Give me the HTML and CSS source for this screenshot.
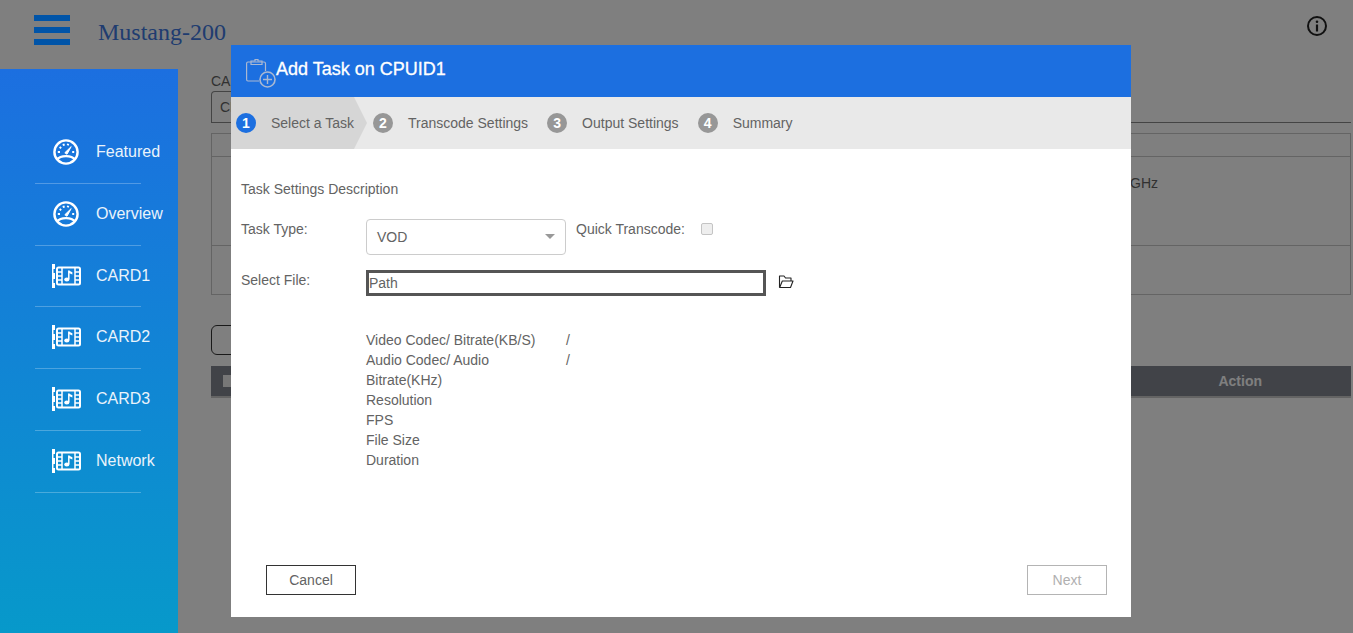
FILE: index.html
```html
<!DOCTYPE html>
<html lang="en">
<head>
<meta charset="utf-8">
<title>Mustang-200</title>
<link rel="stylesheet" href="styles.css">
</head>
<body>
<svg class="defs" width="0" height="0" aria-hidden="true">
  <symbol id="gauge" viewBox="0 0 26 26">
    <circle cx="13" cy="13" r="11.6" fill="none" stroke="currentColor" stroke-width="2.400"/>
    <path d="M4 20.500C7.500 16 18.500 16 22 20.500" fill="none" stroke="currentColor" stroke-width="2.400"/>
    <path d="M11.800 13.800L18.200 7.600L14 15.200Z" fill="currentColor" stroke="currentColor" stroke-width="1"/>
    <path d="M4.800 13h2.200M6.600 8l1.600 1.200M10.400 4.800l.6 2M15.200 4.800l-.5 1.600M19.200 13h2" stroke="currentColor" stroke-width="2" fill="none"/>
  </symbol>
  <symbol id="card" viewBox="0 0 30 24">
    <path d="M1 0h3v5H2.500v4H4v6H2.500v4H4v5H1z" fill="currentColor"/>
    <rect x="6" y="3.500" width="23" height="17" rx="1.500" fill="none" stroke="currentColor" stroke-width="2"/>
    <path d="M11 4v16M24 4v16" stroke="currentColor" stroke-width="1.500" fill="none"/>
    <path d="M7 8h4M7 12h4M7 16h4M24 8h4M24 12h4M24 16h4" stroke="currentColor" stroke-width="1.300" fill="none"/>
    <path d="M17.800 6.500v8.500" stroke="currentColor" stroke-width="1.500" fill="none"/>
    <path d="M17.800 6.500l3.600 1.800v2.200l-3.600-1.500z" fill="currentColor"/>
    <ellipse cx="15.800" cy="15.400" rx="2.600" ry="2" fill="currentColor"/>
  </symbol>
</svg>

<header class="topbar">
  <span class="hamburger"><i></i><i></i><i></i></span>
  <span class="brand">Mustang-200</span>
  <svg class="info" width="20" height="20" viewBox="0 0 20 20" aria-hidden="true">
    <circle cx="10" cy="10" r="9" fill="none" stroke="currentColor" stroke-width="2"/>
    <circle cx="10" cy="5.800" r="1.300" fill="currentColor"/>
    <path d="M10 8.500v7" stroke="currentColor" stroke-width="2.200"/>
  </svg>
</header>

<div class="layout">
  <nav class="sidebar">
    <a class="nav-item"><span class="nav-icon"><svg width="26" height="26"><use href="#gauge"/></svg></span>Featured</a>
    <a class="nav-item"><span class="nav-icon"><svg width="26" height="26"><use href="#gauge"/></svg></span>Overview</a>
    <a class="nav-item"><span class="nav-icon"><svg width="30" height="24"><use href="#card"/></svg></span>CARD1</a>
    <a class="nav-item"><span class="nav-icon"><svg width="30" height="24"><use href="#card"/></svg></span>CARD2</a>
    <a class="nav-item"><span class="nav-icon"><svg width="30" height="24"><use href="#card"/></svg></span>CARD3</a>
    <a class="nav-item"><span class="nav-icon"><svg width="30" height="24"><use href="#card"/></svg></span>Network</a>
  </nav>

  <main class="content">
    <div class="card-label">CARD1</div>
    <div class="tabs"><span class="tab">CPUID1</span></div>
    <div class="info-table">
      <div class="info-row head"></div>
      <div class="info-row tall"><span>Intel Core i7 3.40GHz</span></div>
      <div class="info-row"></div>
    </div>
    <div class="add-btn"></div>
    <div class="task-head"><span class="task-check"></span><span class="task-action">Action</span></div>
  </main>
</div>

<div class="overlay"></div>

<section class="modal">
  <div class="modal-head">
    <svg width="30" height="30" viewBox="0 0 30 30" aria-hidden="true">
      <path d="M13 22H2A1.500 1.500 0 0 1 .6 20.500V4.500A1.500 1.500 0 0 1 2 3H18A1.500 1.500 0 0 1 19.500 4.500V12" fill="none" stroke="currentColor" stroke-width="1.200"/>
      <path d="M5 5.500V2h4V.6h3V2h4v3.500z" fill="none" stroke="currentColor" stroke-width="1.200"/>
      <circle cx="21.500" cy="20.500" r="7.500" fill="none" stroke="currentColor" stroke-width="1.600"/>
      <path d="M17 20.500h9M21.500 16v9" stroke="currentColor" stroke-width="1.400"/>
    </svg>
    <h1>Add Task on CPUID1</h1>
  </div>

  <ol class="steps">
    <li class="step active"><b>1</b><span>Select a Task</span></li>
    <li class="step"><b>2</b><span>Transcode Settings</span></li>
    <li class="step"><b>3</b><span>Output Settings</span></li>
    <li class="step"><b>4</b><span>Summary</span></li>
  </ol>

  <div class="modal-body">
    <p class="desc">Task Settings Description</p>

    <div class="form-row type-row">
      <label class="form-label">Task Type:</label>
      <div class="select">VOD<i class="caret"></i></div>
      <label class="quick">Quick Transcode:</label>
      <span class="checkbox"></span>
    </div>

    <div class="form-row file-row">
      <label class="form-label">Select File:</label>
      <div class="path">Path</div>
      <svg class="folder" width="16" height="15" viewBox="0 0 16 15" aria-hidden="true">
        <path d="M1.500 13.500V2h4.500l1.500 2h5.500v3M1.700 13.500H12.500L15 7H4.300z" fill="none" stroke="currentColor" stroke-width="1.100" stroke-linejoin="round"/>
      </svg>
    </div>

    <dl class="summary">
      <dt>Video Codec/ Bitrate(KB/S)</dt><dd>/</dd>
      <dt>Audio Codec/ Audio Bitrate(KHz)</dt><dd>/</dd>
      <dt>Resolution</dt><dd></dd>
      <dt>FPS</dt><dd></dd>
      <dt>File Size</dt><dd></dd>
      <dt>Duration</dt><dd></dd>
    </dl>

    <div class="modal-foot">
      <button class="btn cancel">Cancel</button>
      <button class="btn next">Next</button>
    </div>
  </div>
</section>
</body>
</html>
```

FILE: styles.css
```css
* { box-sizing: border-box; }
html, body { height: 100%; }
body {
  margin: 0;
  height: 633px;
  overflow: hidden;
  background: #fff;
  font-family: "Liberation Sans", Arial, sans-serif;
  font-size: 14px;
  color: #636363;
}
.defs { display: block; height: 0; }

.topbar {
  height: 69px;
  display: flex;
  align-items: flex-start;
  padding-left: 34px;
}
.hamburger {
  position: relative;
  z-index: 20;
  display: flex;
  flex-direction: column;
  gap: 6px;
  width: 36px;
  margin-top: 15px;
}
.hamburger i { display: block; height: 6px; background: #0054a8; }
.brand {
  margin: 17px 0 0 28px;
  font-family: "Liberation Serif", "Times New Roman", serif;
  font-size: 24px;
  line-height: 30px;
  color: #4078e0;
}
.info { margin: 16px 26px 0 auto; color: #222; }

.layout { display: flex; height: 564px; }
.sidebar {
  position: relative;
  z-index: 20;
  flex: 0 0 178px;
  min-width: 0;
  padding: 53.400px 37px 0 35px;
  background: linear-gradient(180deg, #1c6fe0 0%, #0799ca 100%);
}
.nav-item {
  display: flex;
  align-items: center;
  height: 61.700px;
  border-bottom: 1px solid rgba(255, 255, 255, .25);
  color: #eaf3fb;
  font-size: 16px;
  white-space: nowrap;
  padding-bottom: 1px;
}
.nav-icon {
  flex: 0 0 61px;
  display: flex;
  justify-content: center;
}
.nav-icon svg { display: block; color: #fff; }

.content { flex: 1; min-width: 0; padding: 2px 2px 0 33px; }
.card-label { line-height: 20px; }
.tabs { height: 32px; border-bottom: 1px solid #888; }
.tab {
  display: block;
  width: 200px;
  height: 32px;
  padding: 7px 8px;
  border: 1px solid #888;
  border-bottom: 0;
  border-radius: 4px 4px 0 0;
}
.info-table { margin-top: 10px; height: 162px; border: 1px solid #c8c8c8; }
.info-row { border-bottom: 1px solid #c8c8c8; height: 49px; }
.info-row.head { height: 23px; }
.info-row.tall { height: 89px; padding: 17px 192px 0 0; text-align: right; line-height: 18px; }
.info-row:last-child { border-bottom: 0; }
.add-btn {
  margin-top: 30px;
  width: 200px;
  height: 30px;
  border: 1px solid #333;
  border-radius: 6px;
}
.task-head {
  display: flex;
  align-items: center;
  justify-content: space-between;
  margin-top: 11px;
  height: 32px;
  background: #828690;
  border-bottom: 2px solid #c8c8c8;
  padding: 0 89px 0 12px;
  font-weight: 700;
  color: #fff;
}
.task-check { width: 12px; height: 12px; background: #eee; }

.overlay {
  position: fixed;
  inset: 0;
  z-index: 10;
  background: rgba(0, 0, 0, .5);
}

.modal {
  position: fixed;
  z-index: 30;
  left: 231px;
  top: 45px;
  width: 900px;
  height: 572px;
  display: flex;
  flex-direction: column;
  background: #fff;
}
.modal-head {
  flex: 0 0 52px;
  display: flex;
  align-items: center;
  padding: 0 0 4px 15px;
  background: #1c6fe0;
  color: #a9b8d2;
}
.modal-head svg { display: block; margin-top: 9px; }
.modal-head h1 {
  margin: 0;
  font-size: 18px;
  font-weight: 400;
  color: #fff;
  -webkit-text-stroke: .3px #fff;
}
.steps {
  flex: 0 0 52px;
  display: flex;
  margin: 0;
  padding: 0;
  list-style: none;
  background: #e9e9e9;
}
.step {
  display: flex;
  align-items: center;
  margin-right: 19px;
}
.step b {
  flex: 0 0 20px;
  width: 20px;
  height: 20px;
  margin-right: 15px;
  border-radius: 50%;
  background: #979797;
  color: #fff;
  font-size: 14px;
  line-height: 20px;
  text-align: center;
}
.step.active {
  width: 136px;
  margin-right: 6px;
  padding-left: 5px;
  background: #d6d6d6;
  clip-path: polygon(0 0, 123px 0, 100% 50%, 123px 100%, 0 100%);
  white-space: nowrap;
}
.step.active b { background: #1c6fe0; }

.modal-body {
  flex: 1;
  display: flex;
  flex-direction: column;
  padding: 30px 24px 22px 10px;
  line-height: 20px;
}
.desc { margin: 0; }
.form-row { display: flex; align-items: flex-start; }
.form-label { flex: 0 0 125px; }
.type-row { margin-top: 20px; }
.select {
  position: relative;
  width: 200px;
  height: 36px;
  padding: 7px 10px;
  border: 1px solid #ccc;
  border-radius: 4px;
}
.caret {
  position: absolute;
  right: 10px;
  top: 14px;
  border: 5px solid transparent;
  border-top: 5px solid #999;
  border-bottom: 0;
}
.quick { margin-left: 10px; }
.checkbox {
  width: 12px;
  height: 12px;
  margin: 4px 0 0 16px;
  background: #eee;
  border: 1px solid #c4c4c4;
  border-radius: 2px;
}
.file-row { margin-top: 15px; }
.path {
  width: 400px;
  height: 26px;
  border: 3px solid #555;
  line-height: 21px;
}
.folder { margin: 4px 0 0 12px; color: #222; }

.summary {
  display: grid;
  grid-template-columns: 200px 1fr;
  margin: 34px 0 0 125px;
}
.summary dt, .summary dd { margin: 0; }

.modal-foot {
  display: flex;
  justify-content: space-between;
  margin-top: auto;
  padding-left: 25px;
}
.btn {
  height: 30px;
  background: #fff;
  font-family: inherit;
  font-size: 14px;
}
.cancel { width: 90px; border: 1px solid #333; color: #636363; }
.next { width: 80px; border: 1px solid #b4b4b4; color: #b0b0b0; }
```
